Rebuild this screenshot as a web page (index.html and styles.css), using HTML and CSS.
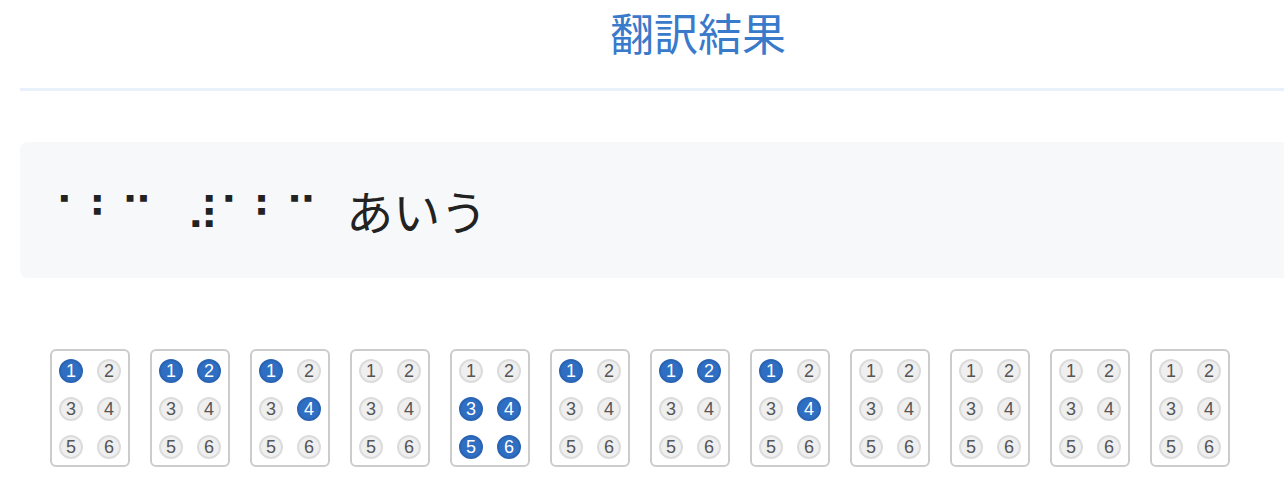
FILE: index.html
```html
<!DOCTYPE html>
<html lang="ja">
<head>
<meta charset="utf-8">
<title>翻訳結果</title>
<link rel="stylesheet" href="styles.css">
</head>
<body>
<div class="page">
  <header class="header">
    <h1 class="title">翻訳結果</h1>
  </header>
  <section class="result">
    <span class="braille">⠁⠃⠉⠀⠼⠁⠃⠉</span><span class="kana">あいう</span>
  </section>
  <section class="cells">
    <div class="cell"><span class="dot on">1</span><span class="dot">2</span><span class="dot">3</span><span class="dot">4</span><span class="dot">5</span><span class="dot">6</span></div>
    <div class="cell"><span class="dot on">1</span><span class="dot on">2</span><span class="dot">3</span><span class="dot">4</span><span class="dot">5</span><span class="dot">6</span></div>
    <div class="cell"><span class="dot on">1</span><span class="dot">2</span><span class="dot">3</span><span class="dot on">4</span><span class="dot">5</span><span class="dot">6</span></div>
    <div class="cell"><span class="dot">1</span><span class="dot">2</span><span class="dot">3</span><span class="dot">4</span><span class="dot">5</span><span class="dot">6</span></div>
    <div class="cell"><span class="dot">1</span><span class="dot">2</span><span class="dot on">3</span><span class="dot on">4</span><span class="dot on">5</span><span class="dot on">6</span></div>
    <div class="cell"><span class="dot on">1</span><span class="dot">2</span><span class="dot">3</span><span class="dot">4</span><span class="dot">5</span><span class="dot">6</span></div>
    <div class="cell"><span class="dot on">1</span><span class="dot on">2</span><span class="dot">3</span><span class="dot">4</span><span class="dot">5</span><span class="dot">6</span></div>
    <div class="cell"><span class="dot on">1</span><span class="dot">2</span><span class="dot">3</span><span class="dot on">4</span><span class="dot">5</span><span class="dot">6</span></div>
    <div class="cell"><span class="dot">1</span><span class="dot">2</span><span class="dot">3</span><span class="dot">4</span><span class="dot">5</span><span class="dot">6</span></div>
    <div class="cell"><span class="dot">1</span><span class="dot">2</span><span class="dot">3</span><span class="dot">4</span><span class="dot">5</span><span class="dot">6</span></div>
    <div class="cell"><span class="dot">1</span><span class="dot">2</span><span class="dot">3</span><span class="dot">4</span><span class="dot">5</span><span class="dot">6</span></div>
    <div class="cell"><span class="dot">1</span><span class="dot">2</span><span class="dot">3</span><span class="dot">4</span><span class="dot">5</span><span class="dot">6</span></div>
  </section>
</div>
</body>
</html>
```
FILE: styles.css
```css
html, body {
  margin: 0;
  padding: 0;
  background: #ffffff;
  overflow: hidden;
}
body {
  font-family: "Noto Sans CJK JP", "Noto Sans", sans-serif;
  color: #222;
}
.page {
  width: 1356px;
  margin-left: 20px;
}
.header {
  border-bottom: 3px solid #e8f1f9;
  height: 88px;
}
.title {
  margin: 0;
  padding-top: 2px;
  text-align: center;
  font-size: 44px;
  line-height: 60px;
  font-weight: 400;
  color: #3a7acb;
}
.result {
  margin-top: 51px;
  height: 136px;
  background: #f7f8fa;
  border-radius: 8px;
  padding: 0 0 0 34px;
  box-sizing: border-box;
  display: flex;
  align-items: center;
  gap: 29px;
}
.braille {
  font-family: "DejaVu Sans Mono", "DejaVu Sans", monospace;
  font-size: 46px;
  letter-spacing: -0.8px;
  line-height: 60px;
  padding-top: 9px;
  color: #222;
}
.kana {
  font-size: 47px;
  line-height: 60px;
  color: #222;
}
.cells {
  margin-top: 71px;
  padding-left: 30px;
  display: flex;
  gap: 20px;
}
.cell {
  width: 80px;
  height: 118px;
  box-sizing: border-box;
  border: 2px solid #cccccc;
  border-radius: 6px;
  padding: 8px 7px 6px;
  display: grid;
  grid-template-columns: 24px 24px;
  grid-template-rows: 24px 24px 24px;
  column-gap: 14px;
  row-gap: 14px;
}
.dot {
  width: 24px;
  height: 24px;
  box-sizing: border-box;
  border-radius: 50%;
  background: #efefef;
  border: 2px solid #dcdcdc;
  color: #555;
  font-family: "Liberation Sans", Arial, sans-serif;
  font-size: 18px;
  line-height: 20px;
  text-align: center;
}
.dot.on {
  background: #2f6fc3;
  border-color: #2a64b2;
  color: #ffffff;
}
```
